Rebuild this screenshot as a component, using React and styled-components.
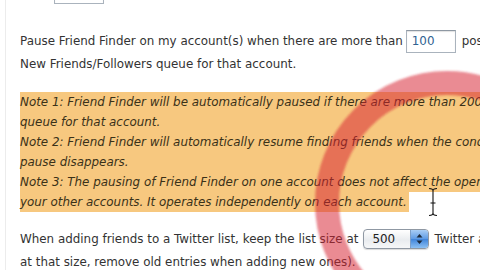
import React from "react";
import styled, { createGlobalStyle } from "styled-components";

const GlobalStyle = createGlobalStyle`
  html, body {
    margin: 0;
    padding: 0;
    background: #ffffff;
    overflow: hidden;
  }
  body {
    width: 480px;
    height: 270px;
    font-family: "DejaVu Sans", Verdana, sans-serif;
  }
`;

const Screen = styled.div`
  position: relative;
  width: 480px;
  height: 270px;
  overflow: hidden;
`;

const Frame = styled.div`
  margin-left: 5px;
  width: 660px;
  min-height: 300px;
  border-left: 1px solid #ececec;
  padding-left: 14px;
  font-size: 11.9px;
  color: #333333;
`;

const Row = styled.div`
  display: flex;
  align-items: center;
  height: ${(p) => p.$h || 22}px;
  margin-top: ${(p) => p.$mt || 0}px;
  white-space: nowrap;
`;

const Gap = styled.span`
  display: inline-block;
  width: ${(p) => p.$w || 4}px;
`;

const Muted = styled.span`
  color: #8a8a8a;
`;

const FieldBox = styled.span`
  display: inline-flex;
  align-items: center;
  box-sizing: border-box;
  width: 50px;
  height: 23px;
  padding-left: 5px;
  border: 1px solid #aab3bd;
  border-top-color: #8e98a3;
  box-shadow: inset 0 1px 1px rgba(0, 0, 0, 0.12);
  color: #2f6291;
  background: #fff;
`;

const Notes = styled.div`
  margin-top: ${(p) => p.$mt || 0}px;
  color: #3a3118;
  font-style: italic;
`;

const NoteLine = styled.div`
  height: 20px;
  line-height: 20px;
  white-space: nowrap;
  background: #f7c87f;
  width: ${(p) => (p.$fit ? "max-content" : "auto")};
  padding-right: ${(p) => (p.$fit ? 2 : 0)}px;
`;

const Stepper = styled.span`
  display: inline-flex;
  align-items: stretch;
  box-sizing: border-box;
  width: 66px;
  height: 20px;
  border: 1px solid #8f98a3;
  border-radius: 4px;
  overflow: hidden;
  background: linear-gradient(#ffffff, #e9ecef 55%, #f6f7f8);
  box-shadow: 0 1px 1px rgba(0, 0, 0, 0.15);
`;

const StepperValue = styled.span`
  flex: 1;
  display: flex;
  align-items: center;
  padding-left: 8px;
  color: #222;
`;

const StepperArrows = styled.span`
  width: 17px;
  display: flex;
  align-items: center;
  justify-content: center;
  border-left: 1px solid #7d9fc8;
  background: linear-gradient(#a9cdf5, #5d9ae4 50%, #3f84da 51%, #8cc0f3);
`;

const Overlay = styled.svg`
  position: absolute;
  left: 0;
  top: 0;
  pointer-events: none;
`;

const Cursor = styled.svg`
  position: absolute;
  left: 426px;
  top: 187px;
  pointer-events: none;
`;

const App = () => {
  return (
    <Screen>
      <GlobalStyle />
      <Frame>
        <Row $h={23} $mt={-19}>
          <Muted>Size:</Muted>
          <Gap $w={6} />
          <FieldBox>250</FieldBox>
          <Gap $w={5} />
          <Muted>px</Muted>
        </Row>

        <Row $h={24} $mt={25}>
          Pause Friend Finder on my account(s) when there are more than
          <Gap $w={3} />
          <FieldBox>100</FieldBox>
          <Gap $w={6} />
          posts in the
        </Row>
        <Row>New Friends/Followers queue for that account.</Row>

        <Notes $mt={17}>
          <NoteLine>
            Note 1: Friend Finder will be automatically paused if there are more than 2000 posts in the New Friends/Followers
          </NoteLine>
          <NoteLine>queue for that account.</NoteLine>
          <NoteLine>
            Note 2: Friend Finder will automatically resume finding friends when the condition that caused the
          </NoteLine>
          <NoteLine>pause disappears.</NoteLine>
          <NoteLine>
            Note 3: The pausing of Friend Finder on one account does not affect the operation of Friend Finder on
          </NoteLine>
          <NoteLine $fit>
            your other accounts. It operates independently on each account.
          </NoteLine>
        </Notes>

        <Row $mt={16}>
          When adding friends to a Twitter list, keep the list size at
          <Gap $w={5} />
          <Stepper>
            <StepperValue>500</StepperValue>
            <StepperArrows>
              <svg width="7" height="12" viewBox="0 0 7 12">
                <path d="M3.5 1 L6.5 4.5 H0.5 Z" fill="#1d2a3a" />
                <path d="M3.5 11 L6.5 7.5 H0.5 Z" fill="#1d2a3a" />
              </svg>
            </StepperArrows>
          </Stepper>
          <Gap $w={5} />
          Twitter accounts (if the list is
        </Row>
        <Row $h={22} $mt={1}>
          at that size, remove old entries when adding new ones).
        </Row>
      </Frame>

      <Overlay width="480" height="270" viewBox="0 0 480 270">
        <defs>
          <filter id="soft" x="-20%" y="-20%" width="140%" height="140%">
            <feGaussianBlur stdDeviation="1.2" />
          </filter>
        </defs>
        <circle
          cx="447"
          cy="203"
          r="120"
          fill="none"
          stroke="rgba(214, 34, 50, 0.52)"
          strokeWidth="24"
          filter="url(#soft)"
        />
      </Overlay>

      <Cursor width="14" height="30" viewBox="0 0 14 30">
        <path
          d="M3 1.5 Q7 1.5 7 4 Q7 1.5 11 1.5 M7 4 V26 Q7 28.5 3 28.5 M7 26 Q7 28.5 11 28.5 M4.5 16 H9.5"
          stroke="#111"
          strokeWidth="1.1"
          fill="none"
        />
      </Cursor>
    </Screen>
  );
};

export default App;
